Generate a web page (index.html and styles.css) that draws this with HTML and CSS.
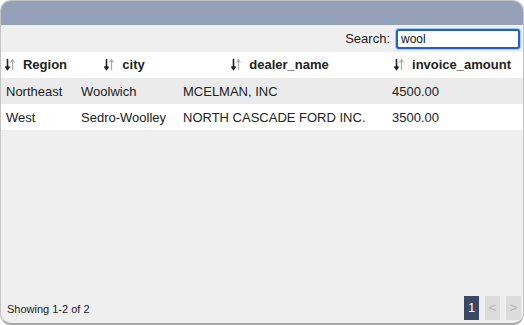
FILE: index.html
```html
<!DOCTYPE html>
<html lang="en">
<head>
    <meta charset="UTF-8">
    <title>Invoices</title>
    <link rel="stylesheet" href="styles.css">
</head>
<body>
    <div class="panel">
        <div class="panel-title"></div>

        <div class="toolbar">
            <label for="search">Search:</label>
            <input type="text" id="search" class="search-box" value="wool">
        </div>

        <div class="grid-wrap">
            <table class="grid">
                <colgroup>
                    <col class="c-region">
                    <col class="c-city">
                    <col class="c-dealer">
                    <col class="c-amount">
                </colgroup>
                <thead>
                    <tr>
                        <th><span class="sort"><svg width="10" height="13" viewBox="0 0 10 13"><path d="M2.5 1v10M0.5 8.5l2 2.8 2-2.8" stroke="#222" stroke-width="1.6" fill="none"/><path d="M7.5 12V2M5.5 4.5l2-2.8 2 2.8" stroke="#aaa" stroke-width="1.2" fill="none"/></svg></span>Region</th>
                        <th><span class="sort"><svg width="10" height="13" viewBox="0 0 10 13"><path d="M2.5 1v10M0.5 8.5l2 2.8 2-2.8" stroke="#222" stroke-width="1.6" fill="none"/><path d="M7.5 12V2M5.5 4.5l2-2.8 2 2.8" stroke="#aaa" stroke-width="1.2" fill="none"/></svg></span>city</th>
                        <th><span class="sort"><svg width="10" height="13" viewBox="0 0 10 13"><path d="M2.5 1v10M0.5 8.5l2 2.8 2-2.8" stroke="#222" stroke-width="1.6" fill="none"/><path d="M7.5 12V2M5.5 4.5l2-2.8 2 2.8" stroke="#aaa" stroke-width="1.2" fill="none"/></svg></span>dealer_name</th>
                        <th><span class="sort"><svg width="10" height="13" viewBox="0 0 10 13"><path d="M2.5 1v10M0.5 8.5l2 2.8 2-2.8" stroke="#222" stroke-width="1.6" fill="none"/><path d="M7.5 12V2M5.5 4.5l2-2.8 2 2.8" stroke="#aaa" stroke-width="1.2" fill="none"/></svg></span>invoice_amount</th>
                    </tr>
                </thead>
                <tbody>
                    <tr class="odd">
                        <td>Northeast</td>
                        <td>Woolwich</td>
                        <td>MCELMAN, INC</td>
                        <td>4500.00</td>
                    </tr>
                    <tr>
                        <td>West</td>
                        <td>Sedro-Woolley</td>
                        <td>NORTH CASCADE FORD INC.</td>
                        <td>3500.00</td>
                    </tr>
                </tbody>
            </table>
        </div>

        <div class="footer">
            <span class="info">Showing 1-2 of 2</span>
            <div class="pager">
                <button class="page current">1</button>
                <button class="page disabled">&lt;</button>
                <button class="page disabled">&gt;</button>
            </div>
        </div>
    </div>
</body>
</html>
```

FILE: styles.css
```css
html, body {
    margin: 0;
    padding: 0;
    background: #fff;
}

body {
    font-family: "Liberation Sans", Arial, sans-serif;
    font-size: 13px;
    color: #222;
}

.panel {
    width: 524px;
    height: 325px;
    box-sizing: border-box;
    display: flex;
    flex-direction: column;
    background: #efefef;
    border: 1px solid #c4c4c4;
    border-bottom: 2px solid #a8a8a8;
    border-radius: 11px;
    overflow: hidden;
}

.panel-title {
    height: 24px;
    background: #95a1b9;
    flex-shrink: 0;
}

/* search row */
.toolbar {
    height: 27px;
    display: flex;
    align-items: center;
    justify-content: flex-end;
    gap: 6px;
    padding-right: 3px;
    flex-shrink: 0;
}

.toolbar label {
    color: #222;
}

.search-box {
    width: 124px;
    height: 20px;
    box-sizing: border-box;
    margin: 0;
    padding: 0 3px;
    font-family: "Liberation Sans", Arial, sans-serif;
    font-size: 12px;
    color: #111;
    border: 2px solid #1f5fcf;
    border-radius: 3px;
    box-shadow: 0 0 0 1px #a8c8f0;
    outline: none;
    background: #fff;
}

/* table */
.grid-wrap {
    flex: 1;
}

.grid {
    width: 100%;
    border-collapse: collapse;
    table-layout: fixed;
}

.c-region { width: 75px; }
.c-city { width: 102px; }
.c-dealer { width: 209px; }
.c-amount { width: auto; }

.grid th {
    height: 26px;
    padding: 0 5px 0 0;
    background: #fff;
    font-weight: bold;
    text-align: center;
    white-space: nowrap;
}

.sort {
    display: inline-block;
    vertical-align: -2px;
    margin-right: 8px;
}

.grid td {
    height: 26px;
    padding: 0 0 0 5px;
    background: #fff;
    white-space: nowrap;
}

.grid tr.odd td {
    background: #ebebeb;
}

/* footer */
.footer {
    height: 31px;
    display: flex;
    align-items: center;
    justify-content: space-between;
    padding: 0 2px 0 6px;
    flex-shrink: 0;
}

.info {
    font-size: 11px;
    color: #222;
    padding-top: 2px;
}

.pager {
    display: flex;
    gap: 6px;
}

.page {
    width: 15px;
    height: 24px;
    padding: 0;
    border: none;
    font-family: "Liberation Sans", Arial, sans-serif;
    font-size: 13px;
    cursor: pointer;
}

.page.current {
    background: #3a4863;
    color: #fff;
}

.page.disabled {
    background: #dcdcdc;
    color: #b4b4b4;
}
```
